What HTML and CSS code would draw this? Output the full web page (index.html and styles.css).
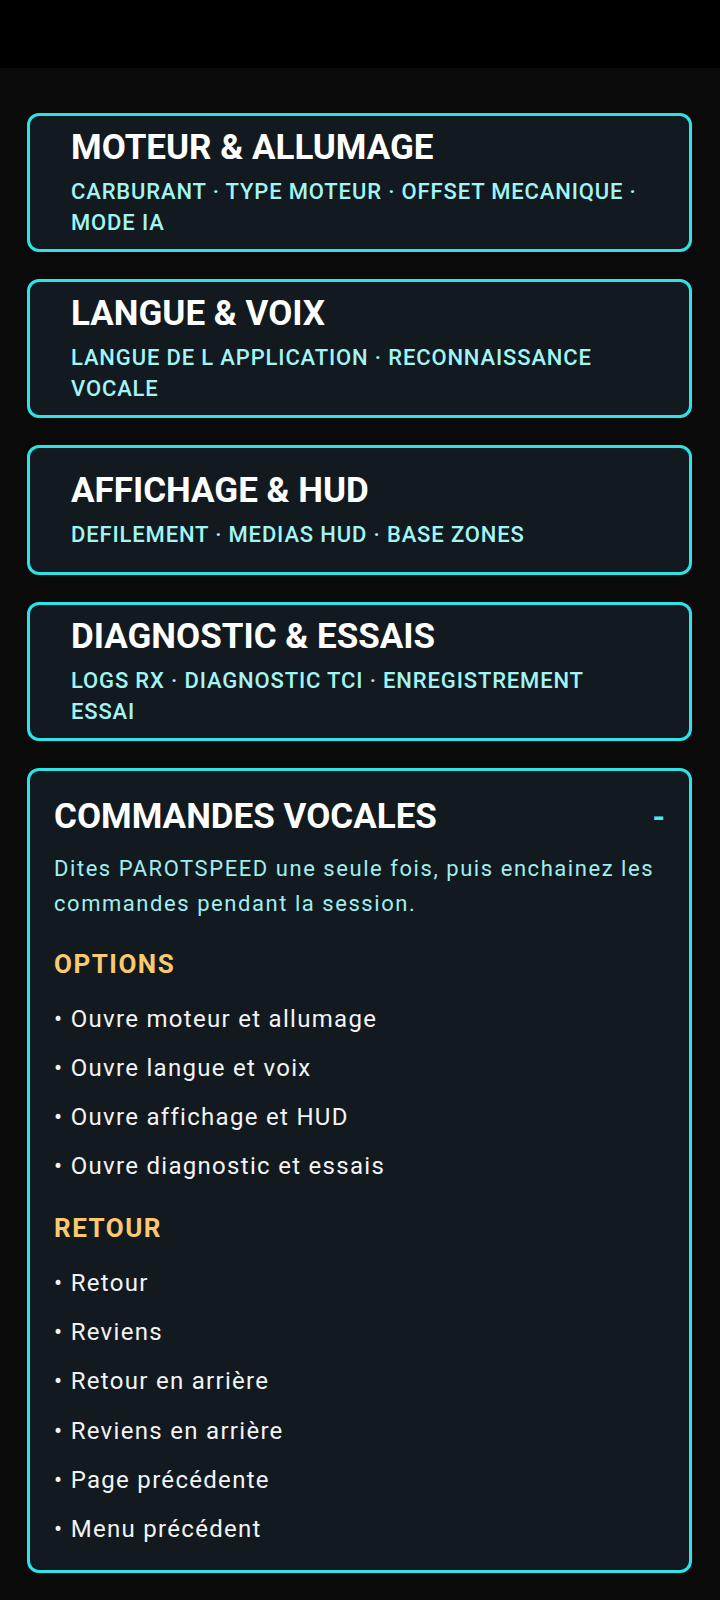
FILE: index.html
```html
<!DOCTYPE html>
<html lang="fr">
<head>
<meta charset="utf-8">
<title>Paramètres</title>
<link rel="stylesheet" href="styles.css">
</head>
<body>
<div class="statusbar"></div>
<main class="content">
  <section class="card nav">
    <h2 class="card-title">MOTEUR &amp; ALLUMAGE</h2>
    <p class="card-sub">CARBURANT · TYPE MOTEUR · OFFSET MECANIQUE · MODE IA</p>
  </section>
  <section class="card nav">
    <h2 class="card-title">LANGUE &amp; VOIX</h2>
    <p class="card-sub">LANGUE DE L APPLICATION · RECONNAISSANCE VOCALE</p>
  </section>
  <section class="card nav">
    <h2 class="card-title">AFFICHAGE &amp; HUD</h2>
    <p class="card-sub">DEFILEMENT · MEDIAS HUD · BASE ZONES</p>
  </section>
  <section class="card nav">
    <h2 class="card-title">DIAGNOSTIC &amp; ESSAIS</h2>
    <p class="card-sub">LOGS RX · DIAGNOSTIC TCI · ENREGISTREMENT ESSAI</p>
  </section>
  <section class="card voice">
    <div class="voice-head">
      <h2 class="card-title">COMMANDES VOCALES</h2>
      <span class="collapse">-</span>
    </div>
    <p class="voice-desc">Dites PAROTSPEED une seule fois, puis enchainez les commandes pendant la session.</p>
    <div class="group">
      <h3 class="group-title">OPTIONS</h3>
      <ul class="cmd-list">
        <li>• Ouvre moteur et allumage</li>
        <li>• Ouvre langue et voix</li>
        <li>• Ouvre affichage et HUD</li>
        <li>• Ouvre diagnostic et essais</li>
      </ul>
    </div>
    <div class="group">
      <h3 class="group-title">RETOUR</h3>
      <ul class="cmd-list">
        <li>• Retour</li>
        <li>• Reviens</li>
        <li>• Retour en arrière</li>
        <li>• Reviens en arrière</li>
        <li>• Page précédente</li>
        <li>• Menu précédent</li>
      </ul>
    </div>
  </section>
</main>
</body>
</html>
```
FILE: styles.css
```css
html, body {
  margin: 0;
  padding: 0;
  background: #0a0a0a;
}
body {
  font-family: Roboto, "Liberation Sans", sans-serif;
  color: #ffffff;
  width: 720px;
  min-height: 1600px;
}
.statusbar {
  height: 68px;
  background: #000000;
}
.content {
  display: flex;
  flex-direction: column;
  gap: 27px;
  padding: 44.7px 28px 0 27px;
}
.card {
  background: #121a20;
  border: 3px solid #2ee3e6;
  border-radius: 12px;
  box-sizing: border-box;
}
.card.nav {
  min-height: 130.3px;
  padding: 13px 48px 10px 41px;
  display: flex;
  flex-direction: column;
  justify-content: center;
}
.card-title {
  margin: 0;
  font-size: 35px;
  line-height: 37.5px;
  font-weight: 700;
  color: #ffffff;
  letter-spacing: 0;
}
.card-sub {
  margin: 11px 0 0;
  font-size: 22px;
  line-height: 30.7px;
  font-weight: 500;
  letter-spacing: 0.85px;
  color: #a3f4f4;
}
.card.voice {
  padding: 24px 24px 24px 24px;
}
.voice-head {
  display: flex;
  align-items: center;
  justify-content: space-between;
  height: 44px;
}
.voice-head .card-title {
  line-height: 44px;
}
.collapse {
  font-size: 32px;
  font-weight: 700;
  color: #4ee8f4;
  line-height: 44px;
}
.voice-desc {
  margin: 13.6px 0 0;
  font-size: 22px;
  line-height: 34.4px;
  font-weight: 400;
  letter-spacing: 1.55px;
  color: #a0eef0;
}
.group {
  margin-top: 26.7px;
}
.group + .group {
  margin-top: 28.6px;
}
.group-title {
  margin: 0;
  font-size: 26px;
  line-height: 32px;
  font-weight: 700;
  letter-spacing: 1.5px;
  color: #fcc96f;
}
.cmd-list {
  list-style: none;
  margin: 22px 0 0;
  padding: 0;
  display: flex;
  flex-direction: column;
  gap: 15.2px;
}
.cmd-list li {
  font-size: 24px;
  line-height: 34px;
  font-weight: 400;
  letter-spacing: 1.3px;
  color: #f2f4f5;
}
```
